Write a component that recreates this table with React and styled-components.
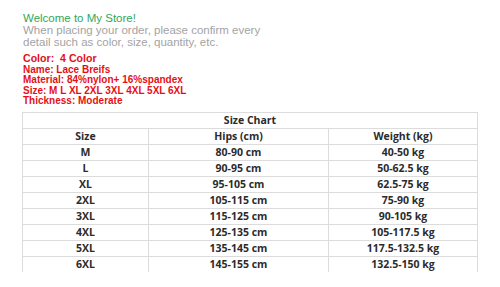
import React from "react";
import styled, { createGlobalStyle } from "styled-components";

const Global = createGlobalStyle`
  html, body { margin: 0; padding: 0; background: #ffffff; }
  body { font-family: "Liberation Sans", Arial, sans-serif; }
`;

const Page = styled.div`
  width: 500px;
  height: 287px;
  overflow: hidden;
  box-sizing: border-box;
  padding: 12px 23px 0 22px;
  display: flex;
  flex-direction: column;
`;

const Intro = styled.div`
  margin-left: 1px;
  font-family: "Liberation Sans", Arial, sans-serif;
  font-size: 11.5px;
  line-height: 12px;
  color: ${(p) => p.$color};
`;

const Specs = styled.div`
  margin-left: 1px;
  display: flex;
  flex-direction: column;
  font-family: "Liberation Sans", Arial, sans-serif;
  font-weight: 700;
  color: #e60f16;
`;

const Spec = styled.div`
  font-size: ${(p) => (p.$big ? "10.6px" : "10px")};
  line-height: ${(p) => (p.$big ? "13px" : "10.5px")};
  margin-top: ${(p) => (p.$big ? "3.5px" : "0")};
  white-space: pre;
`;

const Table = styled.table`
  margin-top: 5px;
  width: 455px;
  table-layout: fixed;
  border-collapse: collapse;
  font-family: "Open Sans", sans-serif;
  font-weight: 700;
  font-size: 10.5px;
  color: #2b2b2b;
`;

const Cell = styled.td`
  border: 1px solid #dcdcdc;
  ${(p) => (p.$last ? "border-bottom: none;" : "")}
  height: 15px;
  padding: 0;
  line-height: 15px;
  text-align: center;
  white-space: nowrap;
`;

const rows = [
  ["M", "80-90 cm", "40-50 kg"],
  ["L", "90-95 cm", "50-62.5 kg"],
  ["XL", "95-105 cm", "62.5-75 kg"],
  ["2XL", "105-115 cm", "75-90 kg"],
  ["3XL", "115-125 cm", "90-105 kg"],
  ["4XL", "125-135 cm", "105-117.5 kg"],
  ["5XL", "135-145 cm", "117.5-132.5 kg"],
  ["6XL", "145-155 cm", "132.5-150 kg"],
];

export default function App() {
  return (
    <Page>
      <Global />
      <Intro $color="#2fa85a">Welcome to My Store!</Intro>
      <Intro $color="#a3a3a3">
        When placing your order, please confirm every
        <br />
        detail such as color, size, quantity, etc.
      </Intro>
      <Specs>
        <Spec $big>{"Color:  4 Color"}</Spec>
        <Spec>Name: Lace Breifs</Spec>
        <Spec>Material: 84%nylon+ 16%spandex</Spec>
        <Spec>Size: M L XL 2XL 3XL 4XL 5XL 6XL</Spec>
        <Spec>Thickness: Moderate</Spec>
      </Specs>
      <Table>
        <colgroup>
          <col style={{ width: 126 }} />
          <col style={{ width: 180 }} />
          <col style={{ width: 149 }} />
        </colgroup>
        <tbody>
          <tr>
            <Cell colSpan={3}>Size Chart</Cell>
          </tr>
          <tr>
            <Cell>Size</Cell>
            <Cell>Hips (cm)</Cell>
            <Cell>Weight (kg)</Cell>
          </tr>
          {rows.map((r, i) => (
            <tr key={r[0]}>
              {r.map((c, j) => (
                <Cell key={j} $last={i === rows.length - 1}>
                  {c}
                </Cell>
              ))}
            </tr>
          ))}
        </tbody>
      </Table>
    </Page>
  );
}
